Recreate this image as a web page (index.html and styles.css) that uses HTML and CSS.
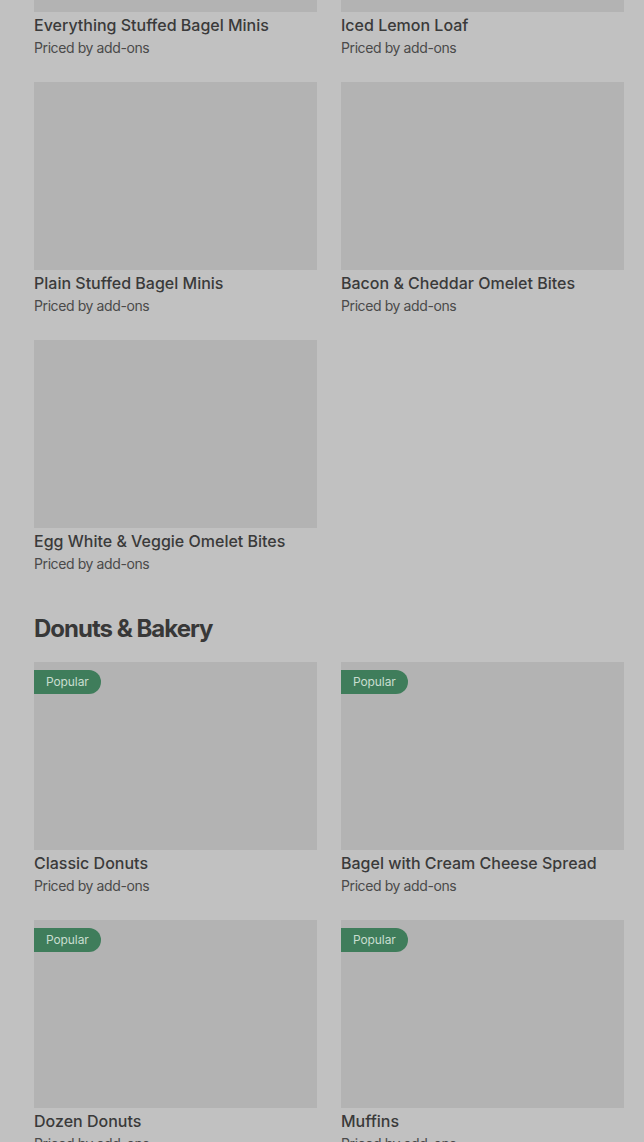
FILE: index.html
```html
<!DOCTYPE html>
<html lang="en">
<head>
    <meta charset="UTF-8">
    <meta name="viewport" content="width=device-width, initial-scale=1.0">
    <title>Menu</title>
    <link rel="stylesheet" href="styles.css">
</head>
<body>
    <div class="menu">
        <section class="section first">
            <div class="grid">
                <div class="item">
                    <div class="photo"></div>
                    <div class="name">Everything Stuffed Bagel Minis</div>
                    <div class="price">Priced by add-ons</div>
                </div>
                <div class="item">
                    <div class="photo"></div>
                    <div class="name">Iced Lemon Loaf</div>
                    <div class="price">Priced by add-ons</div>
                </div>
                <div class="item">
                    <div class="photo"></div>
                    <div class="name">Plain Stuffed Bagel Minis</div>
                    <div class="price">Priced by add-ons</div>
                </div>
                <div class="item">
                    <div class="photo"></div>
                    <div class="name">Bacon &amp; Cheddar Omelet Bites</div>
                    <div class="price">Priced by add-ons</div>
                </div>
                <div class="item">
                    <div class="photo"></div>
                    <div class="name">Egg White &amp; Veggie Omelet Bites</div>
                    <div class="price">Priced by add-ons</div>
                </div>
            </div>
        </section>

        <section class="section">
            <h2 class="section-title">Donuts &amp; Bakery</h2>
            <div class="grid">
                <div class="item">
                    <div class="photo"><span class="badge">Popular</span></div>
                    <div class="name">Classic Donuts</div>
                    <div class="price">Priced by add-ons</div>
                </div>
                <div class="item">
                    <div class="photo"><span class="badge">Popular</span></div>
                    <div class="name">Bagel with Cream Cheese Spread</div>
                    <div class="price">Priced by add-ons</div>
                </div>
                <div class="item">
                    <div class="photo"><span class="badge">Popular</span></div>
                    <div class="name">Dozen Donuts</div>
                    <div class="price">Priced by add-ons</div>
                </div>
                <div class="item">
                    <div class="photo"><span class="badge">Popular</span></div>
                    <div class="name">Muffins</div>
                    <div class="price">Priced by add-ons</div>
                </div>
            </div>
        </section>
    </div>
</body>
</html>
```

FILE: styles.css
```css
body {
    margin: 0;
    padding: 0;
    background-color: #c1c1c1;
    color: #3b3b3b;
    font-family: Inter, "Noto Sans", sans-serif;
    overflow: hidden;
}

.menu {
    padding: 0 20px 0 34px;
    margin-top: -176px;
}

.section.first {
    margin-bottom: 38px;
}

.section-title {
    margin: 0 0 17px 0;
    font-size: 24px;
    line-height: 32px;
    font-weight: 700;
    letter-spacing: -1px;
    color: #383838;
}

.grid {
    display: grid;
    grid-template-columns: 283px 283px;
    column-gap: 24px;
    row-gap: 23px;
}

.photo {
    position: relative;
    height: 188px;
    background-color: #b3b3b3;
}

.badge {
    position: absolute;
    top: 8px;
    left: 0;
    height: 24px;
    line-height: 24px;
    padding: 0 12px;
    background-color: #3f7d5b;
    color: #c9ddd0;
    font-size: 12px;
    letter-spacing: -0.1px;
    border-radius: 0 12px 12px 0;
}

.name {
    margin-top: 1px;
    font-size: 16px;
    line-height: 24px;
    font-weight: 500;
    color: #3a3a3a;
}

.price {
    font-size: 14px;
    line-height: 22px;
    letter-spacing: -0.4px;
    color: #4a4a4a;
}
```
